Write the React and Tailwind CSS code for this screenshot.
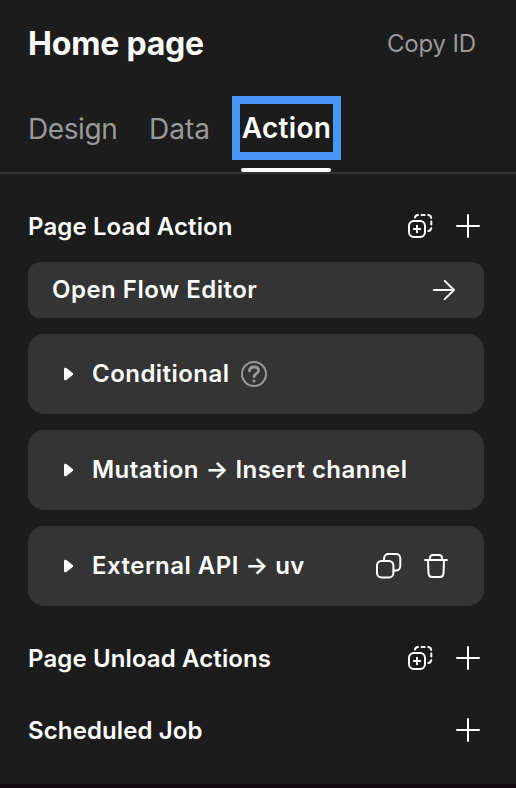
import React from "react";

function Stroke({ className = "size-6", children, viewBox = "0 0 24 24", width = 2 }) {
  return (
    <svg
      className={`shrink-0 ${className}`}
      viewBox={viewBox}
      fill="none"
      stroke="currentColor"
      strokeWidth={width}
      strokeLinecap="round"
      strokeLinejoin="round"
    >
      {children}
    </svg>
  );
}

const Plus = () => (
  <Stroke>
    <path d="M12 1v22M1 12h22" />
  </Stroke>
);

const PasteAction = () => (
  <Stroke className="h-6 w-[26px]" viewBox="0 0 26 24">
    <rect x="2" y="7" width="16" height="16" rx="4.8" />
    <path d="M10 11.8v6.4M6.8 15h6.4" />
    <path d="M8 3.6C8.3 2 9.3 1.2 11 1M14.6 1h3M21.2 1c2 .2 2.9 1.2 3 3M24.3 7.6v3M24.2 14.2c-.3 1.6-1.2 2.5-2.8 2.7" />
  </Stroke>
);

const ArrowRight = () => (
  <Stroke>
    <path d="M1.8 12h20.2M12.7 2.9l9.3 9.1-9.3 9.1" />
  </Stroke>
);

const Help = () => (
  <Stroke className="size-[26px] text-[#999999]" viewBox="0 0 26 26">
    <circle cx="13" cy="13" r="12" />
    <path strokeWidth="2.8" d="M8.4 9.8C8.7 7.4 10.3 6 13 6c2.8 0 4.6 1.4 4.6 3.6 0 3-4.5 3.2-4.5 6.1" />
    <circle cx="13" cy="20" r="1.5" fill="currentColor" stroke="none" />
  </Stroke>
);

const Copy = () => (
  <Stroke className="size-[26px]" viewBox="0 0 26 26">
    <rect x="1" y="8" width="16.4" height="16.4" rx="4.5" />
    <path d="M8.1 7.8V5.1A4.4 4.4 0 0 1 12.5.9h7.4a4.4 4.4 0 0 1 4.4 4.4v7.8a4.4 4.4 0 0 1-4.4 4.4h-2.2" />
  </Stroke>
);

const Trash = () => (
  <Stroke>
    <path d="M1 6h22" />
    <path d="M6 5.8V4.3C6 2.3 7.1 1 9 1h6c1.9 0 3 1.3 3 3.3v1.5" />
    <path d="M4 6.3l.5 13.4c.2 2.2 1.4 3.3 3.6 3.3h7.8c2.2 0 3.4-1.1 3.6-3.3L20 6.3" />
  </Stroke>
);

const Caret = () => (
  <svg className="h-3.5 w-2.5 shrink-0" viewBox="0 0 10 14" fill="currentColor">
    <path d="M0 2.2C0 .6 1.5.3 2.7 1.2l5.7 4.5c1 .8 1 1.8 0 2.6l-5.7 4.5C1.5 13.7 0 13.4 0 11.8Z" />
  </svg>
);

function SectionHeader({ title, paste, className }) {
  return (
    <div className={`flex h-6 items-center justify-between pr-1 ${className}`}>
      <h2 className="pt-0.5 text-2xl font-semibold tracking-[0.12px] whitespace-nowrap">{title}</h2>
      <div className="flex items-center gap-[23px]">
        {paste && <PasteAction />}
        <Plus />
      </div>
    </div>
  );
}

function ActionCard({ title, help, tools }) {
  return (
    <div className="flex h-20 items-center rounded-2xl bg-[#343434] pr-9 pl-9">
      <Caret />
      <span className="ml-[18px] text-2xl font-semibold tracking-[0.47px] whitespace-nowrap">{title}</span>
      {help && (
        <span className="ml-[11px]">
          <Help />
        </span>
      )}
      {tools && (
        <div className="ml-auto flex items-center gap-[22px]">
          <Copy />
          <Trash />
        </div>
      )}
    </div>
  );
}

export default function App() {
  return (
    <div className="h-[788px] w-[516px] overflow-hidden border-b-4 border-[#150c12] bg-[#1c1c1c] font-['Inter',sans-serif] text-white">
      <header className="flex h-[86px] items-center justify-between pt-px pr-10 pl-7">
        <h1 className="text-[32px] font-bold tracking-[-0.2px]">Home page</h1>
        <button className="text-2xl tracking-[-0.15px] text-[#999999]">Copy ID</button>
      </header>
      <nav className="flex h-[88px] border-b-2 border-[#343434] pt-2.5 pl-7 text-[28px] leading-[66px]">
        <span className="w-[121px] tracking-[-0.4px] text-[#999999]">Design</span>
        <span className="w-[83px] text-[#999999]">Data</span>
        <div className="flex w-[109px] flex-col items-center">
          <span className="flex h-16 w-full items-center justify-center border-8 border-[#4797f8] leading-none font-semibold tracking-[0.3px]">
            Action
          </span>
          <span className="mt-2 mr-px h-1 w-[90px] rounded-full bg-white" />
        </div>
      </nav>
      <main className="pt-10 pr-8 pl-7">
        <SectionHeader title="Page Load Action" paste />
        <button className="mt-6 flex h-14 w-full items-center justify-between rounded-xl bg-[#343434] pr-7 pl-6 text-2xl font-semibold tracking-[0.5px]">
          <span>Open Flow Editor</span>
          <ArrowRight />
        </button>
        <div className="mt-4 flex flex-col gap-4">
          <ActionCard title="Conditional" help />
          <ActionCard title="Mutation → Insert channel" />
          <ActionCard title="External API → uv" tools />
        </div>
        <SectionHeader title="Page Unload Actions" paste className="mt-10" />
        <SectionHeader title="Scheduled Job" className="mt-12" />
      </main>
    </div>
  );
}
